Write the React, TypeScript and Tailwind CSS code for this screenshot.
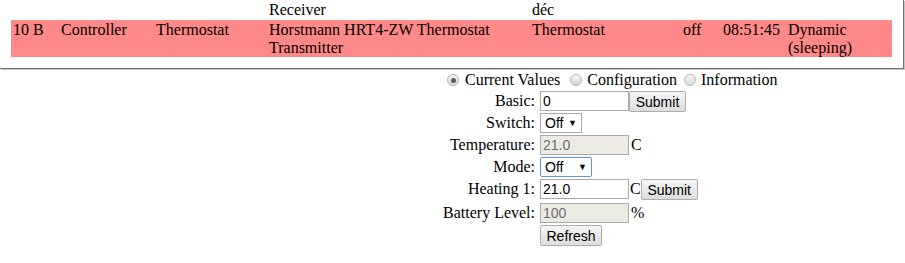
import React from 'react';

const serif = "font-['Liberation_Serif','Times_New_Roman',serif]";
const sans = "font-['Liberation_Sans',Arial,sans-serif]";

function Radio({ checked }: { checked?: boolean }) {
  return (
    <span className="w-[12px] h-[12px] rounded-full border border-[#b4b4b4] bg-gradient-to-b from-[#f6f6f6] to-[#d9d9d9] flex items-center justify-center shrink-0">
      {checked && <span className="w-[5px] h-[5px] rounded-full bg-[#5e5e5e]" />}
    </span>
  );
}

function Button({ label, w }: { label: string; w: string }) {
  return (
    <button
      className={`${sans} ${w} h-[21px] border border-[#adadad] rounded-[2px] bg-gradient-to-b from-[#f5f5f5] to-[#dddddd] text-[14px] text-black leading-none`}
    >
      {label}
    </button>
  );
}

function TextInput({ value, disabled }: { value: string; disabled?: boolean }) {
  return (
    <input
      readOnly
      value={value}
      disabled={disabled}
      className={`${sans} w-[89px] h-[20px] border border-[#a9a9a9] px-[2px] text-[14px] outline-none ${
        disabled ? 'bg-[#ebebe4] text-[#6d6d6d]' : 'bg-white text-black'
      }`}
    />
  );
}

function Select({ w, focused }: { w: string; focused?: boolean }) {
  return (
    <div
      className={`${sans} ${w} h-[20px] flex items-center justify-between pl-[4px] pr-[4px] text-[14px] bg-white ${
        focused ? 'border border-[#5b9bd5] rounded-[2px]' : 'border border-[#a9a9a9]'
      }`}
    >
      <span>Off</span>
      <span className="text-[9px]">▼</span>
    </div>
  );
}

function Row({ label, h = 'h-[22px]', children }: { label: string; h?: string; children: React.ReactNode }) {
  return (
    <div className={`flex ${h} pt-[1px]`}>
      <div className="w-[100px] text-right pr-[2px] leading-[20px]">{label}</div>
      <div className="ml-[3px] flex items-start leading-[20px]">{children}</div>
    </div>
  );
}

export default function App() {
  const cells = ['10 B', 'Controller', 'Thermostat', 'Horstmann HRT4-ZW Thermostat Transmitter', 'Thermostat', 'off', '08:51:45', 'Dynamic (sleeping)'];
  const widths = ['w-[48px]', 'w-[95px]', 'w-[113px]', 'w-[263px]', 'w-[151px]', 'w-[40px]', 'w-[65px]', 'w-[106px]'];

  return (
    <div className={`${serif} w-[905px] h-[263px] bg-white text-black text-[16px]`}>
      {/* node table */}
      <div className="w-[904px] border-r border-b border-[#6f6f6f] shadow-[1px_1px_0_#c4c4c4] pl-[11px] pb-[11px]">
        <table className="table-fixed border-collapse w-[881px]">
          <colgroup>
            {widths.map((w, i) => (
              <col key={i} className={w} />
            ))}
          </colgroup>
          <tbody>
            <tr className="h-[20px]">
              <td className="px-[2px] py-[1px] leading-[18px]" />
              <td className="px-[2px] py-[1px] leading-[18px]" />
              <td className="px-[2px] py-[1px] leading-[18px]" />
              <td className="px-[2px] py-[1px] leading-[18px] align-top">Receiver</td>
              <td className="px-[2px] py-[1px] leading-[18px] align-top">déc</td>
              <td className="px-[2px] py-[1px] leading-[18px]" />
              <td className="px-[2px] py-[1px] leading-[18px]" />
              <td className="px-[2px] py-[1px] leading-[18px]" />
            </tr>
            <tr className="bg-[#ff8888]">
              {cells.map((c, i) => (
                <td key={i} className="px-[2px] pt-[1px] pb-0 leading-[18px] align-top">
                  {c}
                </td>
              ))}
            </tr>
          </tbody>
        </table>
      </div>

      {/* device form */}
      <div className="ml-[437px] w-[352px]">
        <div className="h-[21px] flex items-center pl-[10px] pt-[1px]">
          <Radio checked />
          <span className="ml-[6px]">Current Values</span>
          <span className="ml-[10px]">
            <Radio />
          </span>
          <span className="ml-[5px]">Configuration</span>
          <span className="ml-[7px]">
            <Radio />
          </span>
          <span className="ml-[5px]">Information</span>
        </div>
        <Row label="Basic:">
          <TextInput value="0" />
          <Button label="Submit" w="w-[57px]" />
        </Row>
        <Row label="Switch:">
          <Select w="w-[42px]" />
        </Row>
        <Row label="Temperature:">
          <TextInput value="21.0" disabled />
          <span className="ml-[2px]">C</span>
        </Row>
        <Row label="Mode:">
          <Select w="w-[52px]" focused />
        </Row>
        <Row label="Heating 1:" h="h-[24px]">
          <TextInput value="21.0" />
          <span className="ml-[1px]">C</span>
          <Button label="Submit" w="w-[57px]" />
        </Row>
        <Row label="Battery Level:">
          <TextInput value="100" disabled />
          <span className="ml-[2px]">%</span>
        </Row>
        <Row label="">
          <Button label="Refresh" w="w-[62px]" />
        </Row>
      </div>
    </div>
  );
}
